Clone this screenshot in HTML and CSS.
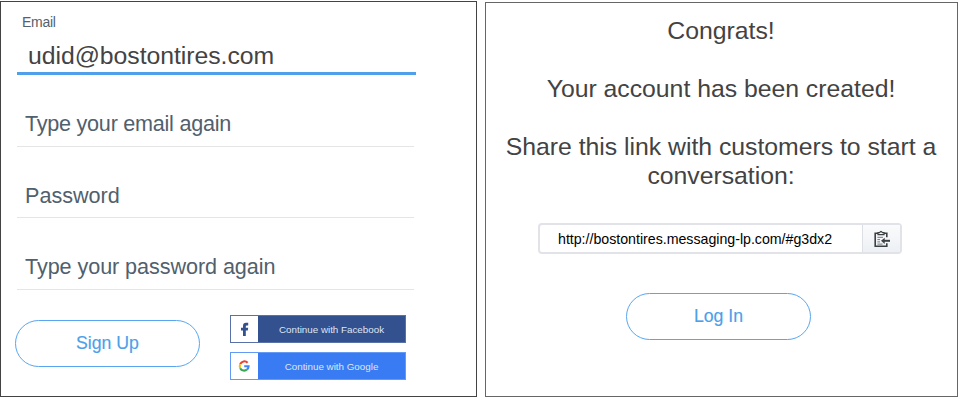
FILE: index.html
```html
<!DOCTYPE html>
<html lang="en">
<head>
<meta charset="utf-8">
<title>Sign up</title>
<link rel="stylesheet" href="styles.css">
</head>
<body>
<main class="screens">
  <section class="panel signup">
    <div class="field field-active">
      <div class="label">Email</div>
      <div class="value">udid@bostontires.com</div>
    </div>
    <div class="field"><span class="hint hint-email">Type your email again</span></div>
    <div class="field"><span class="hint hint-pass">Password</span></div>
    <div class="field"><span class="hint hint-again">Type your password again</span></div>
    <div class="actions">
      <div class="pill">Sign Up</div>
      <div class="social">
        <div class="provider facebook">
          <span class="mark"><svg width="26" height="27" viewBox="0 0 26 27"><path d="M12 20V14.4H10V11.7H12V9.9Q12 6.8 15 6.8H17.2V9.4H15.8Q14.8 9.4 14.8 10.5V11.7H17.2L16.8 14.4H14.8V20Z" fill="#33508f"/></svg></span>
          <span class="caption">Continue with Facebook</span>
        </div>
        <div class="provider google">
          <span class="mark"><svg width="26" height="27" viewBox="0 0 26 27" fill="none" stroke-width="2.1"><path d="M16.6 9.8A4.4 4.4 0 0 0 9.2 11.2" stroke="#ea4335"/><path d="M9.2 11.2A4.4 4.4 0 0 0 9.2 15.2" stroke="#fbbc05"/><path d="M9.2 15.2A4.4 4.4 0 0 0 16 16.5" stroke="#34a853"/><path d="M13.2 13.3H17.6Q17.6 15.3 16 16.5" stroke="#4285f4"/></svg></span>
          <span class="caption">Continue with Google</span>
        </div>
      </div>
    </div>
  </section>
  <section class="panel done">
    <div class="message">
      <p>Congrats!</p>
      <p>Your account has been created!</p>
      <p>Share this link with customers to start a<br>conversation:</p>
    </div>
    <div class="link-box">
      <div class="url">http://bostontires.messaging-lp.com/#g3dx2</div>
      <div class="copy">
        <svg width="18" height="18" viewBox="0 0 18 18" fill="none" stroke="#3b4043" stroke-width="1.6"><path d="M13.8 7.2V3.2H2.2V16.3H13.8V13.2"/><path d="M5 4.6V2.6H6.7Q8 0.2 9.3 2.6H11V4.6Z" fill="#fff" stroke-width="1.2"/><path d="M4.4 7.3H10M4.4 9.6H7M4.4 11.9H7M4.4 14.1H9.5" stroke-width="1" stroke="#73787b"/><path d="M10 10.8H17" stroke-width="2"/><path d="M8 10.8L11.7 7.7V13.9Z" fill="#3b4043" stroke="none"/></svg>
      </div>
    </div>
    <div class="pill">Log In</div>
  </section>
</main>
</body>
</html>
```
FILE: styles.css
```css
* { box-sizing: border-box; }
body {
  margin: 0;
  width: 960px;
  height: 400px;
  overflow: hidden;
  background: #fff;
  font-family: "Liberation Sans", Arial, sans-serif;
  white-space: nowrap;
}
p { margin: 0; }
svg { display: block; }
.screens { display: flex; gap: 8px; padding-top: 1px; }
.panel { border: 1px solid #434343; }
.signup { width: 477px; height: 396px; padding: 0 0 0 16px; }
.done {
  width: 473px;
  height: 395px;
  margin-top: 1px;
  border-color: #666;
  display: flex;
  flex-direction: column;
  align-items: center;
}
.field {
  width: 397px;
  height: 71.5px;
  padding: 36px 0 0 8px;
  border-bottom: 1.5px solid #e3e5e6;
}
.field-active {
  width: 399px;
  height: 73px;
  padding: 11px 0 0 5px;
  border-bottom: 3px solid #509fea;
}
.label {
  height: 18px;
  line-height: 18px;
  font-size: 14px;
  letter-spacing: -0.3px;
  color: #55616d;
}
.value {
  padding: 9px 0 0 6px;
  line-height: 32px;
  font-size: 24.8px;
  letter-spacing: -0.05px;
  color: #434343;
}
.hint {
  display: block;
  line-height: 26px;
  font-size: 21.6px;
  letter-spacing: -0.25px;
  color: #51606d;
}
.hint-pass { letter-spacing: 0; }
.hint-again { letter-spacing: -0.07px; }
.actions { display: flex; align-items: flex-start; padding-top: 25px; }
.pill {
  width: 185px;
  height: 47px;
  border: 1.5px solid #58a6f0;
  border-radius: 24px;
  color: #4c9fea;
  font-size: 17.7px;
  line-height: 44px;
  text-align: center;
  -webkit-text-stroke: 0.15px;
}
.actions .pill { margin: 5px 0 0 -2px; }
.social { display: grid; gap: 9px; margin-left: 30px; }
.provider { display: flex; width: 176px; height: 28px; border: 1px solid; color: #dfe6f3; }
.facebook { background: #33508f; border-color: #5871a7; }
.google { background: #397bf2; border-color: #639af5; }
.mark { width: 27px; background: #fff; }
.caption {
  flex: 1;
  line-height: 28px;
  font-size: 9.8px;
  text-align: center;
}
.message {
  display: grid;
  gap: 29px;
  margin-left: -1px;
  padding-top: 13px;
  color: #434343;
  font-size: 24.8px;
  letter-spacing: -0.02px;
  line-height: 29px;
  text-align: center;
}
.link-box {
  display: flex;
  width: 364px;
  height: 31px;
  margin: 33px 3px 0 0;
  border: 2px solid #e1e3e8;
  border-radius: 4px;
}
.url {
  flex: 1;
  padding-left: 18px;
  font-size: 14.2px;
  letter-spacing: -0.01px;
  line-height: 28px;
  color: #000;
}
.copy {
  width: 38px;
  padding: 5px 0 0 10px;
  border-left: 1px solid #dce0e4;
  background: linear-gradient(#fafbfc, #edf0f4);
}
.done .pill { margin: 39px 6px 0 0; }
```
